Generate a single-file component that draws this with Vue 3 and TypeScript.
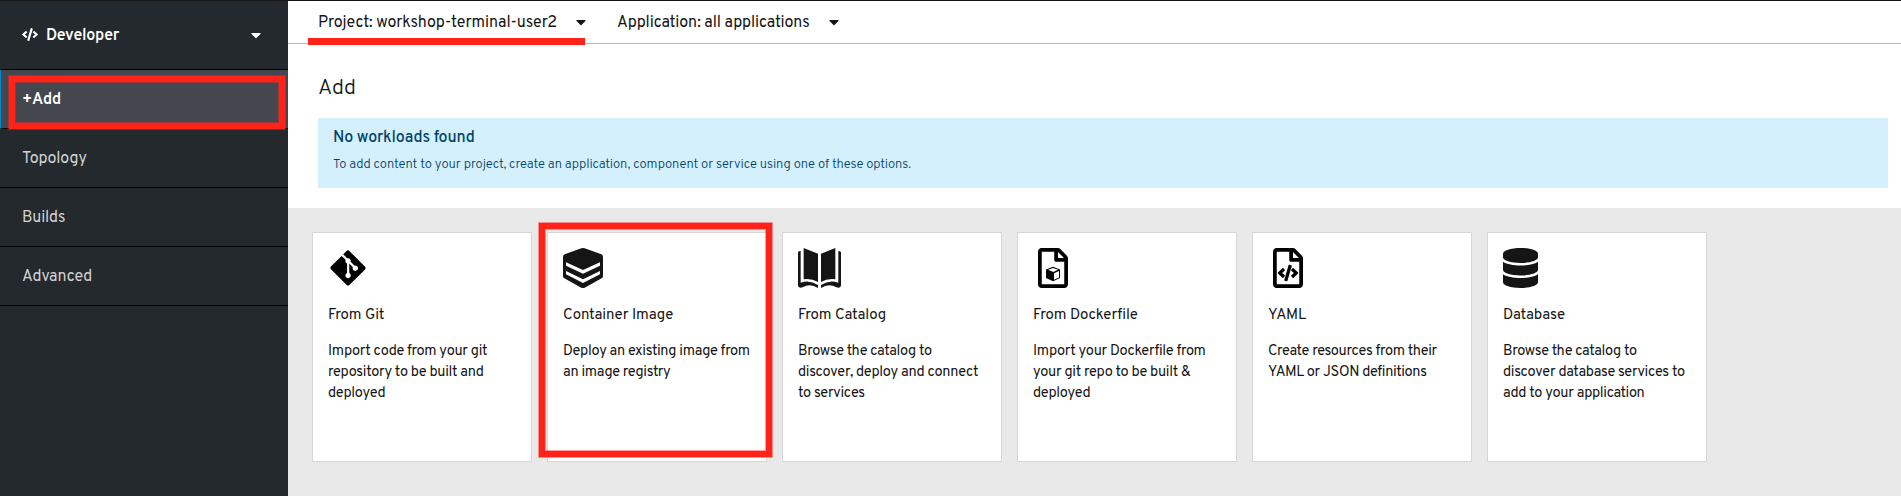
<script setup lang="ts">
interface Shape {
  d: string
  transform?: string
  fill?: string
}

interface Card {
  title: string
  lines: string[]
  width: number
  viewBox: string
  shapes: Shape[]
  marked?: boolean
}

const caret =
  'M31.3 192h257.3c17.8 0 26.7 21.5 14.1 34.1L174.1 354.7c-7.8 7.8-20.5 7.8-28.3 0L17.2 226.1C4.6 213.5 13.5 192 31.3 192z'

const fileOutline =
  'M369.9 97.9L286 14C277 5 264.8-.1 252.1-.1H48C21.5 0 0 21.5 0 48v416c0 26.5 21.5 48 48 48h288c26.5 0 48-21.5 48-48V131.9c0-12.7-5.1-25-14.1-34zM256 51.9l76.1 76.1H256zM336 464H48V48h160v104c0 13.3 10.7 24 24 24h104z'

const navItems = ['Topology', 'Builds', 'Advanced']

const cards: Card[] = [
  {
    title: 'From Git',
    lines: ['Import code from your git', 'repository to be built and', 'deployed'],
    width: 40,
    viewBox: '-32 0 512 512',
    shapes: [
      {
        d: 'M439.55 236.05L244 40.45a28.87 28.87 0 0 0-40.81 0l-40.66 40.63 51.52 51.52c27.06-9.14 52.68 16.77 43.39 43.68l49.66 49.66c34.23-11.8 61.18 31 35.47 56.69-26.49 26.49-70.21-2.87-56-37.34L240.22 199v121.85c25.3 12.54 22.26 41.85 9.08 55a34.34 34.34 0 0 1-48.55 0c-17.57-17.6-11.07-46.91 11.25-56v-123c-20.8-8.51-24.6-30.74-18.64-45L142.57 101 8.45 235.14a28.86 28.86 0 0 0 0 40.81l195.61 195.6a28.86 28.86 0 0 0 40.8 0l194.69-194.69a28.86 28.86 0 0 0 0-40.81z',
        fill: '#000',
      },
    ],
  },
  {
    title: 'Container Image',
    lines: ['Deploy an existing image from', 'an image registry'],
    width: 40,
    viewBox: '0 0 120 120',
    marked: true,
    shapes: [
      { d: 'M55 1Q60-1 65 1L115 19Q120 21 120 27V85Q120 89 116 91L65 119Q60 121 55 119L4 91Q0 89 0 85V27Q0 21 5 19ZM9 43V53L60 77L111 53V43L60 66ZM9 69V79L60 105L111 79V69L60 94Z' },
    ],
  },
  {
    title: 'From Catalog',
    lines: ['Browse the catalog to', 'discover, deploy and connect', 'to services'],
    width: 43,
    viewBox: '0 0 129 120',
    shapes: [
      { d: 'M17 0L60 17V102Q41 91 17 94ZM112 0L69 17V102Q88 91 112 94Z' },
      { d: 'M0 13Q1 9 8 9V104Q34 94 60 111V120Q37 105 14 118Q0 122 0 112ZM129 13Q128 9 121 9V104Q95 94 69 111V120Q92 105 115 118Q129 122 129 112Z' },
    ],
  },
  {
    title: 'From Dockerfile',
    lines: ['Import your Dockerfile from', 'your git repo to be built &', 'deployed'],
    width: 40,
    viewBox: '-64 0 512 512',
    shapes: [
      { d: fileOutline, fill: '#000' },
      {
        d: 'M45 56.5L66 64.5V90L45.5 99.5L24 90V64.5ZM30 65.5L46 72L60.5 65.5L45 60ZM48 75.5V95L63 88.2V69Z',
        transform: 'scale(4.267)',
        fill: '#000',
      },
    ],
  },
  {
    title: 'YAML',
    lines: ['Create resources from their', 'YAML or JSON definitions'],
    width: 40,
    viewBox: '-64 0 512 512',
    shapes: [
      { d: fileOutline, fill: '#000' },
      {
        d: 'M149.9 349.1l-.2-.2-32.8-28.9 32.8-28.9c3.6-3.2 4-8.8.8-12.4l-.2-.2-17.4-18.6c-3.4-3.6-9-3.7-12.4-.4l-57.7 54.1c-3.7 3.5-3.7 9.4 0 12.8l57.7 54.1c1.6 1.5 3.8 2.4 6 2.4 2.4 0 4.8-1 6.4-2.8l17.4-18.6c3.3-3.5 3.1-9.1-.4-12.4zM209.6 214c-4.7-1.4-9.5 1.3-10.9 6L144 408.1c-1.4 4.7 1.3 9.6 6 10.9l24.4 7.1c4.7 1.4 9.6-1.4 10.9-6L240 231.9c1.4-4.7-1.3-9.6-6-10.9zm24.5 76.9l.2.2 32.8 28.9-32.8 28.9c-3.6 3.2-4 8.8-.8 12.4l.2.2 17.4 18.6c3.3 3.5 8.9 3.7 12.4.4l57.7-54.1c3.7-3.5 3.7-9.4 0-12.8l-57.7-54.1c-3.5-3.3-9.1-3.2-12.4.4l-17.4 18.6c-3.3 3.5-3.1 9.1.4 12.4z',
        fill: '#000',
      },
    ],
  },
  {
    title: 'Database',
    lines: ['Browse the catalog to', 'discover database services to', 'add to your application'],
    width: 35,
    viewBox: '0 0 448 512',
    shapes: [
      {
        d: 'M448 73.143v45.714C448 159.143 347.667 192 224 192S0 159.143 0 118.857V73.143C0 32.857 100.333 0 224 0s224 32.857 224 73.143zM448 176v102.857C448 319.143 347.667 352 224 352S0 319.143 0 278.857V176c48.125 33.143 136.208 48.572 224 48.572S399.874 209.143 448 176zm0 160v102.857C448 479.143 347.667 512 224 512S0 479.143 0 438.857V336c48.125 33.143 136.208 48.572 224 48.572S399.874 369.143 448 336z',
      },
    ],
  },
]
</script>

<template>
  <div class="console">
    <aside class="sidebar">
      <div class="perspective">
        <svg class="code-icon" viewBox="0 0 640 512">
          <path
            d="M278.9 511.5l-61-17.7c-6.4-1.8-10-8.5-8.2-14.9L346.2 8.7c1.8-6.4 8.5-10 14.9-8.2l61 17.7c6.4 1.8 10 8.5 8.2 14.9L293.8 503.3c-1.9 6.4-8.5 10.1-14.9 8.2zm-114-112.2l43.5-46.4c4.6-4.9 4.3-12.7-.8-17.2L117 256l90.6-79.7c5.1-4.5 5.5-12.3.8-17.2l-43.5-46.4c-4.5-4.8-12.1-5.1-17-.5L3.8 247.2c-5.1 4.7-5.1 12.8 0 17.5l144.1 135.1c4.9 4.6 12.5 4.4 17-.5zm327.2.6l144.1-135.1c5.1-4.7 5.1-12.8 0-17.5L492.1 112.1c-4.8-4.5-12.4-4.3-17 .5L431.6 159c-4.6 4.9-4.3 12.7.8 17.2L523 256l-90.6 79.7c-5.1 4.5-5.5 12.3-.8 17.2l43.5 46.4c4.5 4.9 12.1 5.1 17 .6z"
          />
        </svg>
        <span class="perspective-name">Developer</span>
        <svg class="caret" viewBox="0 0 320 512"><path :d="caret" /></svg>
      </div>
      <nav>
        <div class="nav-item current"><span>+Add</span><i class="mark mark-nav"></i></div>
        <div v-for="item in navItems" :key="item" class="nav-item"><span>{{ item }}</span></div>
      </nav>
    </aside>

    <main class="main">
      <div class="toolbar">
        <div class="selector project">
          <span>Project: workshop-terminal-user2</span>
          <svg class="caret" viewBox="0 0 320 512"><path :d="caret" /></svg>
          <i class="underline"></i>
        </div>
        <div class="selector application">
          <span>Application: all applications</span>
          <svg class="caret" viewBox="0 0 320 512"><path :d="caret" /></svg>
        </div>
      </div>

      <section class="intro">
        <h1>Add</h1>
        <div class="alert">
          <h2>No workloads found</h2>
          <p>To add content to your project, create an application, component or service using one of these options.</p>
        </div>
      </section>

      <section class="gallery">
        <article v-for="card in cards" :key="card.title" class="card">
          <svg class="card-icon" :width="card.width" height="40" :viewBox="card.viewBox">
            <path
              v-for="(shape, i) in card.shapes"
              :key="i"
              :d="shape.d"
              :transform="shape.transform"
              :fill="shape.fill ?? '#151515'"
              fill-rule="evenodd"
            />
          </svg>
          <h3>{{ card.title }}</h3>
          <p><span v-for="line in card.lines" :key="line">{{ line }}</span></p>
          <i v-if="card.marked" class="mark mark-card"></i>
        </article>
      </section>
    </main>
  </div>
</template>

<style>
body {
  margin: 0;
  overflow: hidden;
}
</style>

<style scoped>
.console {
  display: flex;
  box-sizing: border-box;
  width: 1901px;
  height: 496px;
  border-top: 1px solid #151515;
  background: #fff;
  color: #151515;
  font-family: Overpass, Roboto, "Open Sans", sans-serif;
  font-size: 16px;
  line-height: 24px;
  letter-spacing: -0.08px;
  white-space: nowrap;
  overflow: hidden;
}

h1,
h2,
h3,
p {
  margin: 0;
  font-weight: 400;
}

svg {
  display: block;
  flex: none;
}

.caret {
  width: 10px;
  height: 16px;
  fill: currentColor;
}

.sidebar {
  flex: none;
  width: 288px;
  background: #24292d;
  color: #d2d2d2;
}

.perspective {
  display: flex;
  align-items: center;
  box-sizing: border-box;
  height: 69px;
  padding: 0 27px 0 22px;
  border-bottom: 1px solid #030303;
  color: #fff;
  font-weight: 600;
}

.code-icon {
  width: 16px;
  height: 13px;
  margin: -2px 8px 0 0;
  fill: #fff;
}

.perspective-name {
  flex: 1;
  padding-top: 2px;
  letter-spacing: -0.2px;
}

.nav-item {
  position: relative;
  box-sizing: border-box;
  height: 59px;
  padding: 18px 22px;
  border-bottom: 1px solid #030303;
  letter-spacing: -0.16px;
}

.nav-item.current {
  border-left: 1px solid #0088ce;
  padding-left: 21px;
  background: #44474d;
  color: #fff;
  font-weight: 600;
}

.mark {
  position: absolute;
  box-sizing: border-box;
  border: 6px solid #ff231a;
  box-shadow:
    0 0 0 1px rgba(255, 35, 26, 0.45),
    inset 0 0 0 1px rgba(255, 35, 26, 0.45);
}

.mark-nav {
  top: 6px;
  left: 8px;
  width: 276px;
  height: 53px;
  z-index: 1;
}

.mark-card {
  top: -10px;
  left: -9px;
  width: 233px;
  height: 234px;
}

.main {
  display: flex;
  flex: 1;
  flex-direction: column;
  min-width: 0;
}

.toolbar {
  display: flex;
  box-sizing: border-box;
  height: 43px;
  padding-left: 30px;
  border-bottom: 1px solid #bbb;
}

.selector {
  position: relative;
  display: flex;
  align-items: center;
  justify-content: space-between;
}

.selector span {
  padding-top: 2px;
}

.project {
  width: 268px;
  margin-right: 31px;
}

.application {
  width: 222px;
}

.underline {
  position: absolute;
  top: 37px;
  left: -10px;
  width: 277px;
  height: 7px;
  background: #ff231a;
}

.intro {
  box-sizing: border-box;
  height: 164px;
  padding: 31px 13px 0 30px;
}

h1 {
  height: 43px;
  font-size: 21.5px;
  font-weight: 300;
  line-height: 28px;
  letter-spacing: 0;
}

.alert {
  box-sizing: border-box;
  height: 70px;
  padding: 8px 15px;
  background: #d4f0fd;
  color: #004368;
}

.alert h2 {
  font-size: 16px;
  font-weight: 500;
  letter-spacing: -0.13px;
}

.alert p {
  margin-top: 5px;
  font-size: 13px;
  font-weight: 300;
  line-height: 20px;
  letter-spacing: -0.07px;
}

.gallery {
  display: flex;
  flex: 1;
  align-items: flex-start;
  gap: 15px;
  padding: 24px 0 0 24px;
  background: #e9e9e9;
}

.card {
  position: relative;
  box-sizing: border-box;
  width: 220px;
  height: 230px;
  padding: 15px;
  border: 1px solid #d6d6d6;
  background: #fff;
}

.card h3 {
  margin-top: 17px;
  font-size: 15px;
  line-height: 22px;
}

.card p {
  margin-top: 14px;
  font-size: 14.5px;
  line-height: 21px;
  letter-spacing: -0.31px;
}

.card p span {
  display: block;
}
</style>
